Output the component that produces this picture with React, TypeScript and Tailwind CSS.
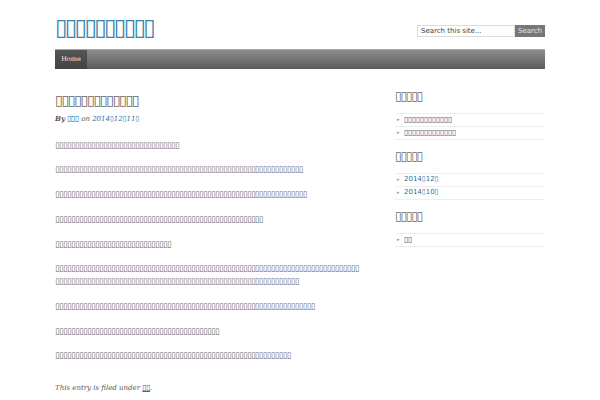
const BOX = "\u25AF";

function Tofu({ n }: { n: number }) {
  return <>{BOX.repeat(n)}</>;
}

// each entry is one paragraph; numbers are the box count per rendered line
const PARAGRAPHS: number[][] = [[31], [62], [63], [52], [29], [76, 61], [65], [41], [59]];

const RECENT = [12, 13];
const ARCHIVES = ["2014", "2014"];
const MONTHS = ["12", "10"];

function SideHeading({ n }: { n: number }) {
  return (
    <h3 className="font-['DejaVu_Sans'] text-[12px] tracking-[-1.2px] leading-[16px] text-[#6a6a6a] pb-[8.5px]">
      <Tofu n={n} />
    </h3>
  );
}

function SideItem({ children }: { children: React.ReactNode }) {
  return (
    <li className="flex h-[13px] items-center border-b border-[#eeeeee] pl-[2px]">
      <span className="mr-[4px] text-[5px] leading-none text-[#999]">&#9656;</span>
      <a className="font-['DejaVu_Sans'] text-[7px] leading-none text-[#2b6ea3]">{children}</a>
    </li>
  );
}

export default function App() {
  return (
    <div className="min-h-[400px] bg-white">
      <div className="mx-auto w-[490px]">
        <header className="flex h-[49px] items-start justify-between">
          <h1 className="pt-[15px] font-['DejaVu_Sans'] text-[23px] leading-[24px] tracking-[-2.85px] text-[#3582ab]">
            <Tofu n={10} />
          </h1>
          <form className="mt-[25px] flex h-[12px]" onSubmit={(e) => e.preventDefault()}>
            <input
              className="h-[12px] w-[98px] border border-[#dddddd] px-[3px] font-['DejaVu_Sans'] text-[7px] text-[#444] placeholder:text-[#444] outline-none"
              placeholder="Search this site..."
            />
            <button className="h-[12px] w-[30px] bg-[#777777] font-['DejaVu_Sans'] text-[7px] leading-none text-[#e6e6e6]">
              Search
            </button>
          </form>
        </header>

        <nav className="flex h-[20px] border-t border-[#a9a9a9] bg-gradient-to-b from-[#8c8c8c] to-[#5c5c5c]">
          <a className="flex w-[32px] items-center justify-center bg-gradient-to-b from-[#555555] to-[#444444] font-['DejaVu_Serif'] text-[6.5px] text-[#eeeeee]">
            Home
          </a>
        </nav>

        <div className="flex pt-[20px]">
          <main className="w-[310px] pt-[2.5px]">
            <h2 className="font-['DejaVu_Sans'] text-[14px] leading-[16px] tracking-[-1.3px] text-[#666]">
              <Tofu n={13} />
            </h2>
            <p className="mt-[5px] font-['DejaVu_Serif'] text-[7px] italic leading-[12px] text-[#555]">
              <span className="font-bold">By</span>{" "}
              <a className="not-italic font-['DejaVu_Sans'] text-[8px] tracking-[-0.5px] text-[#2b6ea3]">
                <Tofu n={3} />
              </a>{" "}
              on{" "}
              <a className="text-[#2b6ea3]">
                2014<span className="not-italic font-['DejaVu_Sans']">{BOX}</span>12
                <span className="not-italic font-['DejaVu_Sans']">{BOX}</span>11
                <span className="not-italic font-['DejaVu_Sans']">{BOX}</span>
              </a>
            </p>

            <div className="mt-[14px]">
              {PARAGRAPHS.map((lines, i) => (
                <p
                  key={i}
                  className="mb-[12.2px] font-['DejaVu_Sans'] text-[8.5px] leading-[12.6px] tracking-[-0.68px] text-[#6a6a6a]"
                >
                  {lines.map((n, j) => (
                    <span key={j} className="block">
                      <Tofu n={n} />
                    </span>
                  ))}
                </p>
              ))}
            </div>

            <p className="mt-[21px] font-['DejaVu_Serif'] text-[7px] italic leading-[10.5px] text-[#555]">
              This entry is filed under{" "}
              <a className="not-italic font-['DejaVu_Sans'] text-[8px] tracking-[-0.5px] text-[#2b6ea3] underline">
                <Tofu n={2} />
              </a>
              .
            </p>
          </main>

          <aside className="-mt-[1px] ml-auto w-[150px]">
            <SideHeading n={5} />
            <ul className="mb-[8.5px] border-t border-[#eeeeee]">
              {RECENT.map((n, i) => (
                <SideItem key={i}>
                  <span className="text-[8px] tracking-[-0.4px]">
                    <Tofu n={n} />
                  </span>
                </SideItem>
              ))}
            </ul>
            <SideHeading n={5} />
            <ul className="mb-[8.5px] border-t border-[#eeeeee]">
              {ARCHIVES.map((y, i) => (
                <SideItem key={i}>
                  {y}
                  {BOX}
                  {MONTHS[i]}
                  {BOX}
                </SideItem>
              ))}
            </ul>
            <SideHeading n={5} />
            <ul className="border-t border-[#eeeeee]">
              <SideItem>
                <span className="text-[8px] tracking-[-0.4px]">
                  <Tofu n={2} />
                </span>
              </SideItem>
            </ul>
          </aside>
        </div>
      </div>
    </div>
  );
}
